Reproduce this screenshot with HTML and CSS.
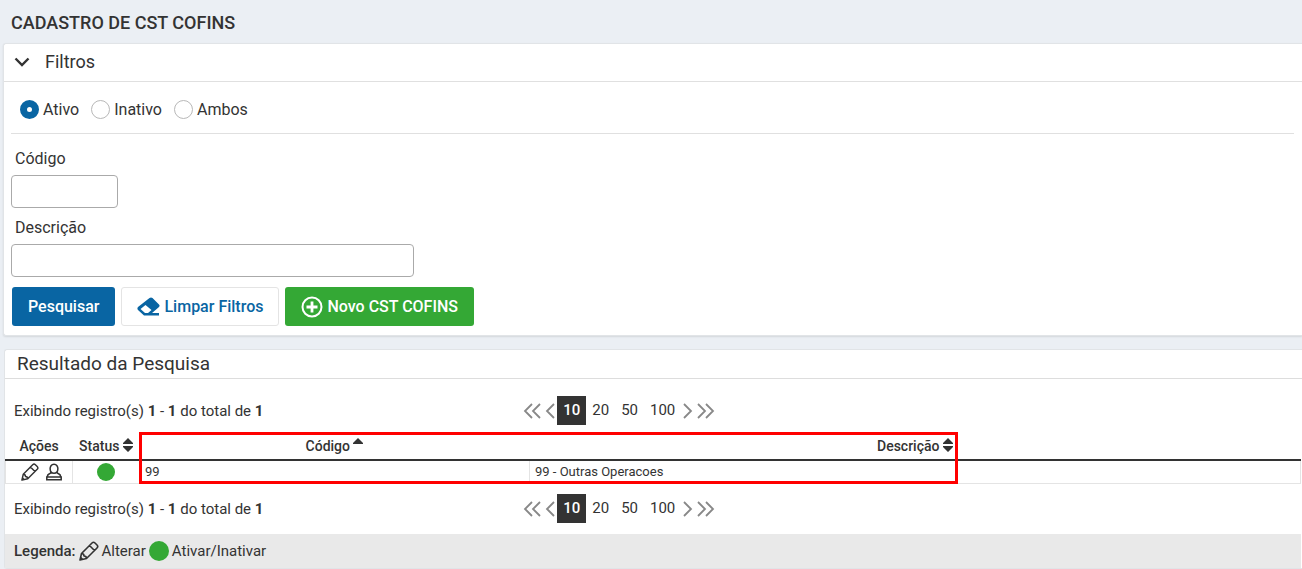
FILE: index.html
```
<!DOCTYPE html>
<html lang="pt-BR">

<head>
    <meta charset="utf-8">
    <title>Cadastro de CST COFINS</title>
    <link rel="stylesheet" href="styles.css">
</head>

<body>
    <svg class="sprite" aria-hidden="true">
        <symbol id="pencil" viewBox="0 0 20 20">
            <path d="M1 19L2.500 12.500 13 2q1.500-1.500 3 0l2 2q1.500 1.500 0 3L7.500 17.500zM10.500 4.500l5 5M2.500 12.500q2.500 0 2.500 2.500 2.500 0 2.500 2.500" fill="none" stroke="currentColor" stroke-width="1.600" stroke-linejoin="round"/>
            <path d="M1 19l.8-3.500 2.700 2.700z" fill="currentColor"/>
        </symbol>
        <symbol id="user" viewBox="0 0 18 20">
            <path d="M9 1.500c-6 0-5.500 10 0 10s6-10 0-10zM5.500 10.500C5 12.500 1.500 11.500 1.500 15.500h15c0-4-3.500-3-4-5M1 15.500h16v3H1z" fill="none" stroke="currentColor" stroke-width="1.700"/>
        </symbol>
        <symbol id="prev" viewBox="0 0 10 16">
            <path d="M9 1L2 8l7 7" fill="none" stroke="currentColor" stroke-width="1.800"/>
        </symbol>
        <symbol id="first" viewBox="0 0 18 16">
            <path d="M9 1L2 8l7 7M17 1l-7 7 7 7" fill="none" stroke="currentColor" stroke-width="1.800"/>
        </symbol>
        <symbol id="next" viewBox="0 0 10 16">
            <path d="M1 1l7 7-7 7" fill="none" stroke="currentColor" stroke-width="1.800"/>
        </symbol>
        <symbol id="last" viewBox="0 0 18 16">
            <path d="M1 1l7 7-7 7M9 1l7 7-7 7" fill="none" stroke="currentColor" stroke-width="1.800"/>
        </symbol>
        <symbol id="sort" viewBox="0 0 10 14">
            <path d="M5 0l5 5v1H0V5zM0 8h10v1l-5 5-5-5z" fill="currentColor"/>
        </symbol>
        <symbol id="sort-up" viewBox="0 0 10 14">
            <path d="M5 0l5 5v1H0V5z" fill="currentColor"/>
        </symbol>
    </svg>

    <h1 class="page-title">CADASTRO DE CST COFINS</h1>

    <form class="panel filters">
        <h2 class="filters-title">
            <svg class="chevron" viewBox="0 0 16 10"><path d="M1.500 1.500L8 8l6.500-6.500" fill="none" stroke="currentColor" stroke-width="2.400"/></svg>
            Filtros
        </h2>
        <div class="filters-body">
            <div class="radios">
                <label class="radio"><input type="radio" name="situacao" checked>Ativo</label>
                <label class="radio"><input type="radio" name="situacao">Inativo</label>
                <label class="radio"><input type="radio" name="situacao">Ambos</label>
            </div>
            <label class="field-label" for="codigo">Código</label>
            <input class="field field-small" id="codigo" type="text">
            <label class="field-label" for="descricao">Descrição</label>
            <input class="field field-large" id="descricao" type="text">
            <div class="buttons">
                <button class="button primary" type="button">Pesquisar</button>
                <button class="button clear" type="reset">
                    <svg class="eraser" viewBox="0 0 23 19"><path fill-rule="evenodd" d="M1 10L12.500 1q1.500-1 3 0l6.500 6.500q1.200 1.300 0 2.500l-7 6h7v2.500H7L1 13q-1.200-1.500 0-3zM8.500 8L3.500 12l4.500 4h3l3.500-3z" fill="currentColor"/></svg>
                    Limpar Filtros
                </button>
                <button class="button new" type="button">
                    <svg class="plus" viewBox="0 0 22 22"><circle cx="11" cy="11" r="9.500" fill="none" stroke="currentColor" stroke-width="2"/><path d="M11 5.500v11M5.500 11h11" stroke="currentColor" stroke-width="2.800"/></svg>
                    Novo CST COFINS
                </button>
            </div>
        </div>
    </form>

    <section class="panel results">
        <h2 class="results-title">Resultado da Pesquisa</h2>

        <div class="pager-row">
            <div>Exibindo registro(s) <b>1</b> - <b>1</b> do total de <b>1</b></div>
            <nav class="pager" aria-label="Paginação superior">
                <a class="arrow" href="#" aria-label="Primeira"><svg class="double"><use href="#first"/></svg></a>
                <a class="arrow" href="#" aria-label="Anterior"><svg class="single"><use href="#prev"/></svg></a>
                <a class="size current" href="#">10</a>
                <a class="size" href="#">20</a>
                <a class="size" href="#">50</a>
                <a class="size" href="#">100</a>
                <a class="arrow" href="#" aria-label="Próxima"><svg class="single"><use href="#next"/></svg></a>
                <a class="arrow" href="#" aria-label="Última"><svg class="double"><use href="#last"/></svg></a>
            </nav>
        </div>

        <div class="table-wrap">
            <table class="table">
                <thead>
                    <tr>
                        <th class="col-icon">Ações</th>
                        <th class="col-icon">Status <svg class="sort"><use href="#sort"/></svg></th>
                        <th class="col-code">Código <svg class="sort"><use href="#sort-up"/></svg></th>
                        <th>Descrição <svg class="sort"><use href="#sort"/></svg></th>
                    </tr>
                </thead>
                <tbody>
                    <tr>
                        <td>
                            <div class="actions">
                                <a href="#" aria-label="Alterar"><svg class="icon"><use href="#pencil"/></svg></a>
                                <a href="#" aria-label="Usuário"><svg class="icon"><use href="#user"/></svg></a>
                            </div>
                        </td>
                        <td><div class="status"><span class="dot"></span></div></td>
                        <td>99</td>
                        <td>99 - Outras Operacoes</td>
                    </tr>
                </tbody>
            </table>
            <div class="highlight"></div>
        </div>

        <div class="pager-row">
            <div>Exibindo registro(s) <b>1</b> - <b>1</b> do total de <b>1</b></div>
            <nav class="pager" aria-label="Paginação inferior">
                <a class="arrow" href="#" aria-label="Primeira"><svg class="double"><use href="#first"/></svg></a>
                <a class="arrow" href="#" aria-label="Anterior"><svg class="single"><use href="#prev"/></svg></a>
                <a class="size current" href="#">10</a>
                <a class="size" href="#">20</a>
                <a class="size" href="#">50</a>
                <a class="size" href="#">100</a>
                <a class="arrow" href="#" aria-label="Próxima"><svg class="single"><use href="#next"/></svg></a>
                <a class="arrow" href="#" aria-label="Última"><svg class="double"><use href="#last"/></svg></a>
            </nav>
        </div>

        <div class="legend">
            <b>Legenda:</b>
            <svg class="icon"><use href="#pencil"/></svg>
            <span>Alterar</span>
            <span class="dot"></span>
            <span>Ativar/Inativar</span>
        </div>
    </section>
</body>

</html>
```
FILE: styles.css
```
* {
    box-sizing: border-box;
}

body {
    margin: 0;
    padding-left: 3px;
    background: #ebeff4;
    color: #333;
    font-family: Roboto, sans-serif;
    font-size: 14px;
}

a {
    color: inherit;
    text-decoration: none;
}

svg {
    display: block;
}

.sprite {
    display: none;
}

.page-title {
    margin: 0;
    padding: 13px 8px 10px;
    font-size: 18px;
    line-height: 20px;
    font-weight: 500;
}

.panel {
    background: #fff;
    border: 1px solid #e1e4e7;
    border-right: 0;
    border-radius: 3px 0 0 3px;
}

.filters {
    margin-bottom: 13px;
    box-shadow: 0 1px 2px rgba(0, 0, 0, 0.1);
}

.filters-title {
    display: flex;
    align-items: center;
    gap: 15px;
    height: 38px;
    margin: 0;
    padding: 0 0 2px 10px;
    border-bottom: 1px solid #e0e0e0;
    font-size: 18px;
    font-weight: 400;
}

.chevron {
    width: 16px;
    height: 10px;
}

.filters-body {
    padding: 0 8px 8px 7px;
}

.radios {
    display: flex;
    align-items: center;
    gap: 12px;
    height: 52px;
    padding: 3px 0 0 9px;
    border-bottom: 1px solid #e0e0e0;
    font-size: 16px;
}

.radio {
    display: flex;
    align-items: center;
    gap: 4px;
}

.radio input {
    appearance: none;
    width: 19px;
    height: 19px;
    margin: 0;
    border: 1px solid #b8b8b8;
    border-radius: 50%;
    background: #fff;
}

.radio input:checked {
    border: 7px solid #0965a3;
}

.field-label {
    display: block;
    padding: 15px 4px 6px;
    font-size: 16px;
    line-height: 20px;
}

.field {
    display: block;
    height: 33px;
    padding: 4px 8px;
    border: 1px solid #aaa;
    border-radius: 4px;
    background: #fff;
    font: inherit;
}

.field + .field-label {
    padding-top: 10px;
}

.field-small {
    width: 107px;
}

.field-large {
    width: 403px;
}

.buttons {
    display: flex;
    gap: 6px;
    padding: 10px 1px 1px;
}

.button {
    display: flex;
    align-items: center;
    justify-content: center;
    gap: 4px;
    height: 39px;
    padding: 0 15px;
    border: 1px solid transparent;
    border-radius: 3px;
    color: #fff;
    font-family: inherit;
    font-size: 16px;
    font-weight: 500;
}

.primary {
    background: #0965a3;
}

.clear {
    background: #fff;
    border-color: #e4e4e4;
    color: #0965a3;
}

.new {
    background: #34a835;
}

.eraser {
    width: 23px;
    height: 19px;
}

.plus {
    width: 22px;
    height: 22px;
}

.results {
    margin-left: 1px;
}

.results-title {
    height: 29px;
    margin: 0;
    padding-left: 12px;
    border-bottom: 1px solid #ddd;
    font-size: 19px;
    line-height: 28px;
    font-weight: 400;
}

.pager-row {
    display: grid;
    grid-template-columns: 40% 1fr;
    align-items: center;
    height: 50px;
    padding-left: 9px;
    font-size: 15px;
    line-height: 20px;
}

.results-title + .pager-row {
    height: 53px;
    padding-top: 10px;
}

.pager {
    display: flex;
    align-items: center;
    margin-left: -8px;
    color: #888;
    font-size: 14px;
}

.arrow {
    padding: 0 2px;
}

.single {
    width: 10px;
    height: 16px;
}

.double {
    width: 18px;
    height: 16px;
}

.size {
    padding: 0 6px;
    color: #333;
    font-size: 15px;
    line-height: 29px;
}

.current {
    background: #333;
    color: #fff;
    font-weight: 500;
}

.table-wrap {
    position: relative;
    padding-right: 1px;
}

.table {
    width: 100%;
    table-layout: fixed;
    border-collapse: collapse;
}

.table th {
    height: 28px;
    padding: 0;
    border-bottom: 2px solid #333;
    font-weight: 500;
}

.table td {
    height: 23px;
    padding: 0 5px;
    border: 1px solid #e4e4e4;
    font-size: 13px;
    line-height: 20px;
}

.col-icon {
    width: 67px;
}

.col-code {
    width: 390px;
}

.sort {
    display: inline-block;
    width: 10px;
    height: 14px;
    vertical-align: -1px;
}

.actions {
    display: flex;
    justify-content: flex-end;
    gap: 6px;
    padding-right: 4px;
}

.status {
    display: flex;
    justify-content: center;
}

.icon {
    width: 20px;
    height: 20px;
}

.actions .icon {
    width: 18px;
    height: 18px;
}

.dot {
    width: 18px;
    height: 18px;
    border-radius: 50%;
    background: #34a835;
}

/* frame around the code and description columns */
.highlight {
    position: absolute;
    top: 0;
    bottom: 0;
    left: 134px;
    width: 819px;
    border: 3px solid #f00;
}

.legend {
    display: flex;
    align-items: center;
    gap: 3px;
    height: 34px;
    margin-right: 1px;
    padding-left: 9px;
    background: #e9e9e9;
    font-size: 15px;
}

.legend b {
    font-weight: 500;
}

.legend .dot {
    width: 20px;
    height: 20px;
}
```
